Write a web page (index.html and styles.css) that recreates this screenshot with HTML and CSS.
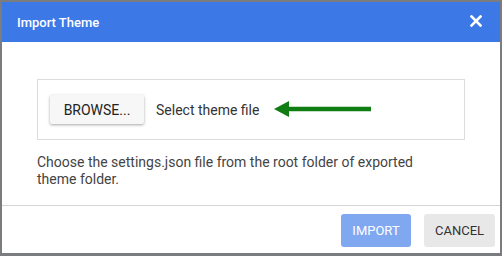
FILE: index.html
```html
<!DOCTYPE html>
<html lang="en">
<head>
    <meta charset="UTF-8">
    <title>Import Theme</title>
    <link rel="stylesheet" href="styles.css">
</head>
<body>

    <div class="dialog">
        <div class="dialog-header">
            <span class="dialog-title">Import Theme</span>
            <svg class="close-icon" width="12" height="12" viewBox="0 0 12 12">
                <path d="M1.5 1.5 L10.5 10.5 M10.5 1.5 L1.5 10.5" stroke="#fff" stroke-width="2.6" stroke-linecap="square"/>
            </svg>
        </div>

        <div class="dialog-body">
            <div class="file-box">
                <button class="browse-button">BROWSE...</button>
                <span class="file-label">Select theme file</span>
                <svg class="arrow" width="98" height="18" viewBox="0 0 98 18">
                    <path d="M15 6.8 H97 V11.2 H15 Z" fill="#0f7d12"/>
                    <path d="M0 9 L15 1 L15 17 Z" fill="#0f7d12"/>
                </svg>
            </div>
            <p class="hint">Choose the settings.json file from the root folder of exported theme folder.</p>
        </div>

        <div class="dialog-footer">
            <button class="btn btn-import" disabled>IMPORT</button>
            <button class="btn btn-cancel">CANCEL</button>
        </div>
    </div>

</body>
</html>
```

FILE: styles.css
```css
body {
    margin: 0;
    background-color: #7a7c80;
    font-family: Roboto, "Liberation Sans", sans-serif;
    height: 256px;
    overflow: hidden;
}

.dialog {
    margin: 2px 2px 0 2px;
    height: 251px;
    background-color: #fff;
    display: flex;
    flex-direction: column;
}

.dialog-header {
    height: 40px;
    background-color: #3c79e6;
    color: white;
    display: flex;
    align-items: center;
    justify-content: space-between;
    padding: 0 18px 0 15px;
}

.dialog-title {
    font-size: 13px;
    font-weight: 500;
    margin-top: 1px;
}

.close-icon {
    margin-top: -3px;
}

.dialog-body {
    padding: 37px 35px 0 35px;
    height: 126px;
}

.file-box {
    border: 1px solid #dcdcdc;
    width: 402px;
    padding: 15px 12px;
    display: flex;
    align-items: center;
}

.browse-button {
    font-family: inherit;
    font-size: 14px;
    color: #222;
    background-color: #f7f7f7;
    border: none;
    border-radius: 2px;
    box-shadow: 0 1px 3px rgba(0, 0, 0, 0.35);
    width: 94px;
    height: 29px;
    padding: 0;
}

.file-label {
    font-size: 14px;
    color: #333;
    margin-left: 12px;
}

.arrow {
    margin-left: 15px;
    margin-top: -2px;
}

.hint {
    margin: 14px 0 0 0;
    font-size: 14px;
    line-height: 17px;
    color: #444;
    width: 390px;
}

.dialog-footer {
    border-top: 1px solid #d4d4d4;
    flex: 1;
    display: flex;
    justify-content: flex-end;
    align-items: flex-start;
    gap: 13px;
    padding: 8px 5px 0 0;
}

.btn {
    font-family: inherit;
    font-size: 13px;
    border: none;
    border-radius: 3px;
    height: 33px;
    padding: 0;
}

.btn-import {
    width: 70px;
    background-color: #80a8f0;
    color: #fff;
}

.btn-cancel {
    width: 71px;
    background-color: #e8e8e8;
    color: #333;
}
```
